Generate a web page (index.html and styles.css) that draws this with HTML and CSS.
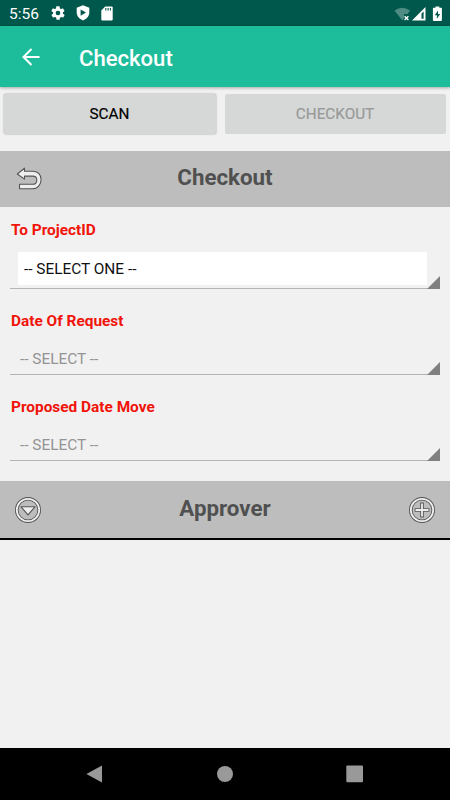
FILE: index.html
```html
<!DOCTYPE html>
<html lang="en">
<head>
<meta charset="utf-8">
<title>Checkout</title>
<link rel="stylesheet" href="styles.css">
</head>
<body>
<div class="screen">
  <header class="status">
    <span class="clock">5:56</span>
    <svg class="gear" width="16" height="16" viewBox="0 0 24 24" fill="#fff"><path d="M19.4 13c.1-.3.1-.7.1-1s0-.7-.1-1l2.1-1.6c.2-.2.3-.4.1-.7l-2-3.400c-.1-.2-.4-.3-.6-.2l-2.500 1c-.5-.4-1.100-.7-1.700-1l-.4-2.600c0-.3-.2-.5-.5-.5h-4c-.2 0-.4.2-.5.4l-.4 2.700c-.6.2-1.100.6-1.700 1l-2.500-1c-.2-.1-.5 0-.6.2l-2 3.400c-.1.200-.1.500.1.700L4.600 11c-.1.300-.1.700-.1 1s0 .7.1 1l-2.100 1.600c-.2.200-.2.400-.1.700l2 3.400c.1.200.4.300.6.200l2.500-1c.5.400 1.100.7 1.700 1l.4 2.600c0 .300.2.500.5.500h4c.2 0 .5-.2.5-.4l.4-2.700c.6-.2 1.100-.6 1.700-1l2.500 1c.2.100.5 0 .6-.2l2-3.400c.1-.2.1-.5-.1-.7zM12 15.500a3.500 3.500 0 1 1 0-7 3.500 3.500 0 0 1 0 7z"/></svg>
    <svg class="shield" width="14" height="16" viewBox="0 0 14 16"><path d="M7 .3l6.300 2.500v4.700c0 3.500-2.600 6.600-6.300 7.900C3.300 14.100.7 11 .7 7.500V2.800z" fill="#fff"/><path d="M4.600 4.400v6.400L10 7.600z" fill="#00574b"/></svg>
    <svg class="sd" width="12" height="15" viewBox="0 0 12 15"><path d="M4.200.4h6.500q1 0 1 1v12q0 1-1 1H1.300q-1 0-1-1V4.500z" fill="#fff"/><path d="M4.800 2v2.600M7.100 2v2.600M9.400 2v2.600" stroke="#00574b" stroke-width="1.100"/></svg>
    <svg class="signals" width="52" height="18" viewBox="0 0 52 18"><path d="M.5 4.400Q8.300-1.100 16 4.400L13.500 8H10v4.200l-1.700 2.200z" fill="#4f8b82"/><path d="M10.600 10.200l3.800 3.800m0-3.800l-3.800 3.800" stroke="#fff" stroke-width="1.400"/><path d="M31.500 1v13.500H18z" fill="#fff"/><path d="M29.600 5.500v7.300h-2.100V7.600z" fill="#00574b"/><path d="M41.500.5h3.800v1.300h2q.6 0 .6.700v11.600q0 .9-.9.900h-7.200q-.9 0-.9-.9V2.500q0-.7.6-.7h2z" fill="#fff"/><path d="M44 4.500L40.800 9.200h2.100v3.500L46.200 8h-2.200z" fill="#00574b"/></svg>
  </header>
  <div class="appbar">
    <svg width="20" height="20" viewBox="0 0 20 20" fill="none" stroke="#fff" stroke-width="2"><path d="M18.500 10H3M10.500 2L2.500 10l8 8"/></svg>
    <h1>Checkout</h1>
  </div>
  <div class="buttons">
    <button class="btn scan">SCAN</button>
    <button class="btn" disabled>CHECKOUT</button>
  </div>
  <div class="band">
    <svg class="icon undo" width="28" height="28" viewBox="0 0 28 28"><path d="M1.300 8L8.500 2.200v3h8c5 0 8.600 3.300 8.600 8.300s-3.600 9.300-8.600 9.300h-13v-4.500h13c2.500 0 4.300-1.900 4.300-4.400s-1.800-3.800-4.300-3.800h-8v3z" fill="#eee" stroke="#555" stroke-width="1.100" stroke-linejoin="round"/></svg>
    <h2>Checkout</h2>
    <span class="icon"></span>
  </div>
  <main class="form">
    <div class="field"><label>To ProjectID</label><div class="spinner chosen"><span>-- SELECT ONE --</span></div></div>
    <div class="field"><label>Date Of Request</label><div class="spinner"><span>-- SELECT --</span></div></div>
    <div class="field"><label>Proposed Date Move</label><div class="spinner"><span>-- SELECT --</span></div></div>
  </main>
  <div class="band approver">
    <svg class="icon" width="28" height="28" viewBox="0 0 28 28" fill="none"><circle cx="14" cy="14" r="11.200" stroke="#555" stroke-width="3.600"/><circle cx="14" cy="14" r="11.200" stroke="#eee" stroke-width="1.800"/><path d="M7 10.800h14l-7 8z" fill="#eee" stroke="#555" stroke-width="1.100" stroke-linejoin="round"/></svg>
    <h2>Approver</h2>
    <svg class="icon" width="28" height="28" viewBox="0 0 28 28" fill="none"><circle cx="14" cy="14" r="11.200" stroke="#555" stroke-width="3.600"/><circle cx="14" cy="14" r="11.200" stroke="#eee" stroke-width="1.800"/><path d="M14 6.600v14.800M6.600 14h14.800" stroke="#555" stroke-width="3.600"/><path d="M14 7.500v13M7.500 14h13" stroke="#eee" stroke-width="1.800"/></svg>
  </div>
  <nav class="nav">
    <svg width="18" height="20" viewBox="0 0 18 20"><path d="M.4 10L16 1.400v17.200z" fill="#999"/></svg>
    <svg width="18" height="20" viewBox="0 0 18 20"><circle cx="9" cy="10" r="8" fill="#999"/></svg>
    <svg width="18" height="20" viewBox="0 0 18 20"><rect x=".3" y="1.500" width="16.700" height="16.700" rx="1" fill="#999"/></svg>
  </nav>
</div>
</body>
</html>
```
FILE: styles.css
```css
* { box-sizing: border-box; }
body { margin: 0; font-family: Roboto, sans-serif; background: #f1f1f1; }
h1, h2 { margin: 0; }
svg { display: block; flex: none; }
.screen { width: 450px; height: 800px; display: flex; flex-direction: column; overflow: hidden; }
.status { height: 26px; background: #00574b; display: flex; align-items: center; padding: 0 4px 0 9px; flex: none; }
.clock { color: #fff; font-size: 15.5px; width: 41px; line-height: 26px; padding-top: 2px; }
.shield { margin-left: 10px; }
.sd { margin-left: 11px; }
.signals { margin-left: auto; margin-top: 3px; }
.appbar { height: 61px; background: #1dbd9c; display: flex; align-items: center; padding: 0 0 0 21px; gap: 38px; box-shadow: 0 1px 3px rgba(0,0,0,.3); flex: none; }
.appbar h1 { color: #fff; font-size: 22.1px; font-weight: 500; line-height: 28px; padding-top: 2px; }
.buttons { display: grid; grid-template-columns: 212px 221px; gap: 9px; height: 64px; padding: 7px 4px 17px 4px; flex: none; }
.btn { border: 0; border-radius: 2px; background: #d6d8d7; font: 400 15.3px/40px Roboto, sans-serif; padding: 0 1px 0 0; color: #989a99; -webkit-text-stroke: .2px currentColor; }
.scan { color: #000; box-shadow: 0 0 2px rgba(0,0,0,.4); }
.band { height: 56px; background: #bdbdbd; display: flex; justify-content: space-between; align-items: center; padding: 0 14px; flex: none; }
.icon { width: 28px; }
.undo { margin-left: 2px; margin-top: 2px; margin-right: -2px; }
.band h2 { color: #505050; font-size: 22.3px; font-weight: 700; line-height: 28px; padding-bottom: 4px; }
.form { height: 274px; padding: 14px 10px 0; flex: none; }
.field { height: 86px; padding-top: 5px; }
.field:first-child { padding-top: 0; }
.field label { display: block; margin-left: 1px; color: #f0140a; font-weight: 700; font-size: 15.4px; line-height: 18px; }
.spinner { height: 44px; margin-top: 1px; border-bottom: 1px solid #b5b5b5; position: relative; padding: 10px; font-size: 15.4px; line-height: 36px; color: #949494; }
.field .spinner { padding-top: 10px; }
.field .spinner.chosen { height: 49px; padding: 12px 13px 4px 8px; color: #111; }
.spinner.chosen span { display: block; height: 33px; line-height: 34px; padding-left: 6px; background: #fff; }
.spinner::after { content: ""; position: absolute; right: 0; bottom: -1px; width: 13px; height: 13px; background: #808080; clip-path: polygon(100% 0, 100% 100%, 0 100%); }
.approver { height: 59px; border-bottom: 2px solid #000; }
.nav { margin-top: auto; height: 52px; background: #000; display: flex; justify-content: center; align-items: center; gap: 112px; flex: none; }
```
